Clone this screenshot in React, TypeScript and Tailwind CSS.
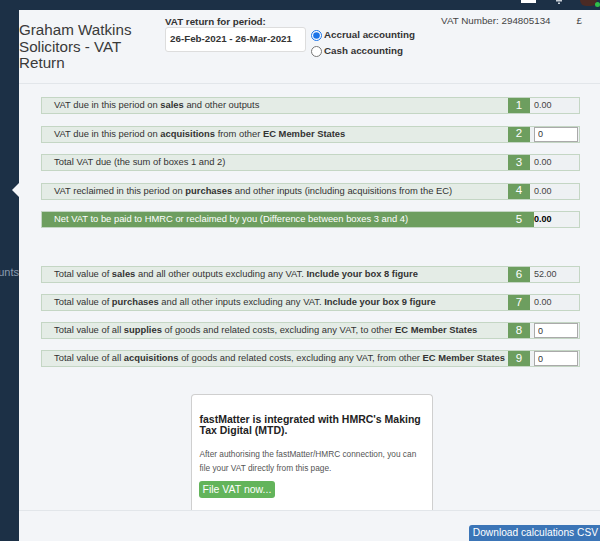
import React from 'react';

type Row = {
  n: number;
  label: React.ReactNode;
  value: string;
  input?: boolean;
  total?: boolean;
};

const GROUP_A: Row[] = [
  { n: 1, label: <>VAT due in this period on <b>sales</b> and other outputs</>, value: '0.00' },
  { n: 2, label: <>VAT due in this period on <b>acquisitions</b> from other <b>EC Member States</b></>, value: '0', input: true },
  { n: 3, label: <>Total VAT due (the sum of boxes 1 and 2)</>, value: '0.00' },
  { n: 4, label: <>VAT reclaimed in this period on <b>purchases</b> and other inputs (including acquisitions from the EC)</>, value: '0.00' },
  { n: 5, label: <>Net VAT to be paid to HMRC or reclaimed by you (Difference between boxes 3 and 4)</>, value: '0.00', total: true },
];

const GROUP_B: Row[] = [
  { n: 6, label: <>Total value of <b>sales</b> and all other outputs excluding any VAT. <b>Include your box 8 figure</b></>, value: '52.00' },
  { n: 7, label: <>Total value of <b>purchases</b> and all other inputs excluding any VAT. <b>Include your box 9 figure</b></>, value: '0.00' },
  { n: 8, label: <>Total value of all <b>supplies</b> of goods and related costs, excluding any VAT, to other <b>EC Member States</b></>, value: '0', input: true },
  { n: 9, label: <>Total value of all <b>acquisitions</b> of goods and related costs, excluding any VAT, from other <b>EC Member States</b></>, value: '0', input: true },
];

const VatRow = ({ row }: { row: Row }) => (
  <div className="flex h-[17px] border border-[#c4d6c4] bg-[#eef1f3]">
    <div
      className={`flex-1 flex items-center pl-[12px] text-[9.4px] whitespace-nowrap overflow-hidden ${
        row.total ? 'bg-[#6d9e5f] text-white' : 'bg-[#e4ece6] text-[#333]'
      }`}
    >
      <span>{row.label}</span>
    </div>
    <div className="w-[22px] bg-[#6d9e5f] text-white text-[11.5px] flex items-center justify-center">
      {row.n}
    </div>
    <div className={`w-[49px] flex ${row.total ? 'border-l-[4px] border-[#6d9e5f]' : 'pl-[4px]'}`}>
      {row.input ? (
        <input
          defaultValue={row.value}
          className="w-[44px] h-full bg-white border border-[#aaa] px-[3px] text-[9px] text-[#333] outline-none"
        />
      ) : (
        <span className={`pt-[2px] text-[9px] leading-[10px] ${row.total ? 'font-bold text-black' : 'text-[#444]'}`}>
          {row.value}
        </span>
      )}
    </div>
  </div>
);

export default function App() {
  return (
    <div
      className="w-[600px] h-[541px] overflow-hidden bg-[#1c3046] flex flex-col"
      style={{ fontFamily: "'Liberation Sans', Arial, sans-serif" }}
    >
      {/* ── Top bar (mostly scrolled off) ───────────────────────── */}
      <div className="h-[10px] flex items-start justify-end overflow-hidden">
        <div className="w-[15px] h-[3px] bg-white mr-[20px]" />
        <svg width="6" height="4" viewBox="0 0 6 4" className="mr-[18px]">
          <path d="M0 0h6v1.5H0z M2 2.5h2v1.5H2z" fill="#c9d0d8" />
        </svg>
        <div className="relative w-[17px] h-[6px] rounded-b-full bg-[#4a2a24] mr-[3px]">
          <span className="absolute right-[-3px] top-[2px] w-[5px] h-[5px] rounded-full bg-[#2fbf4a]" />
        </div>
      </div>

      <div className="flex flex-1 min-h-0">
        {/* ── Sidebar ───────────────────────────────────────────── */}
        <aside className="relative w-[19px] shrink-0">
          <span className="absolute right-0 top-[173px] w-0 h-0 border-y-[7px] border-y-transparent border-r-[7px] border-r-[#f3f5f8]" />
          <div className="mt-[254px] flex justify-end overflow-hidden whitespace-nowrap text-[11px] text-[#8b9cb0]">
            Accounts
          </div>
        </aside>

        {/* ── Main ──────────────────────────────────────────────── */}
        <main className="flex-1 bg-[#f3f5f8] flex flex-col min-w-0">
          <div className="h-[503px] border-b border-[#e2e6ea] flex flex-col">
            {/* header */}
            <div className="h-[74px] shrink-0 border-b border-[#e2e6ea] flex items-start text-[#333]">
              <h1 className="w-[146px] pt-[12px] text-[15.2px] leading-[16.5px] font-normal text-[#3a3a3a]">
                Graham Watkins Solicitors - VAT Return
              </h1>
              <div className="pt-[6px]">
                <p className="text-[9.8px] font-bold leading-[11px]">VAT return for period:</p>
                <div className="w-[141px] h-[25px] bg-white border border-[#ddd] rounded-[3px] flex items-center pl-[4px] text-[9.8px] font-bold text-[#333]">
                  26-Feb-2021 - 26-Mar-2021
                </div>
              </div>
              <div className="ml-[5px] pt-[19px] flex flex-col gap-[4px] text-[9.8px] font-bold">
                <label className="flex items-center gap-[2px] h-[12px]">
                  <input type="radio" name="acc" defaultChecked className="w-[11px] h-[11px] m-0 accent-[#1a73e8]" />
                  Accrual accounting
                </label>
                <label className="flex items-center gap-[2px] h-[12px]">
                  <input type="radio" name="acc" className="w-[11px] h-[11px] m-0" />
                  Cash accounting
                </label>
              </div>
              <div className="ml-auto pt-[4px] flex text-[9.8px] text-[#444]">
                <span>VAT Number: 294805134</span>
                <span className="ml-[26px] mr-[18px]">£</span>
              </div>
            </div>

            {/* boxes */}
            <div className="ml-[22px] mr-[20px] pt-[13px] flex flex-col gap-[11.5px]">
              {GROUP_A.map((r) => (
                <VatRow key={r.n} row={r} />
              ))}
            </div>
            <div className="ml-[22px] mr-[20px] mt-[38px] flex flex-col gap-[11px]">
              {GROUP_B.map((r) => (
                <VatRow key={r.n} row={r} />
              ))}
            </div>

            {/* MTD card */}
            <div className="mt-auto mx-auto w-[242px] h-[116px] bg-white border border-[#cfcfcf] border-b-0 rounded-t-[4px] pl-[8px] pr-[4px] pt-[19px] translate-x-[2px]">
              <h2 className="text-[10.5px] leading-[10.5px] font-bold text-[#222]">
                fastMatter is integrated with HMRC's Making Tax Digital (MTD).
              </h2>
              <p className="mt-[12px] text-[8.3px] leading-[14px] text-[#555]">
                After authorising the fastMatter/HMRC connection, you can file your VAT directly from this page.
              </p>
              <button className="mt-[6px] h-[17px] px-[4px] rounded-[3px] bg-[#63b45b] text-white text-[10.5px] leading-[17px] -translate-x-[1px]">
                File VAT now...
              </button>
            </div>
          </div>

          {/* footer */}
          <div className="flex justify-end pt-[14px]">
            <button className="h-[16px] pl-[4px] pr-[2px] rounded-tl-[3px] bg-[#3b75b7] text-white text-[10.2px] leading-[16px] whitespace-nowrap">
              Download calculations CSV
            </button>
          </div>
        </main>
      </div>
    </div>
  );
}
